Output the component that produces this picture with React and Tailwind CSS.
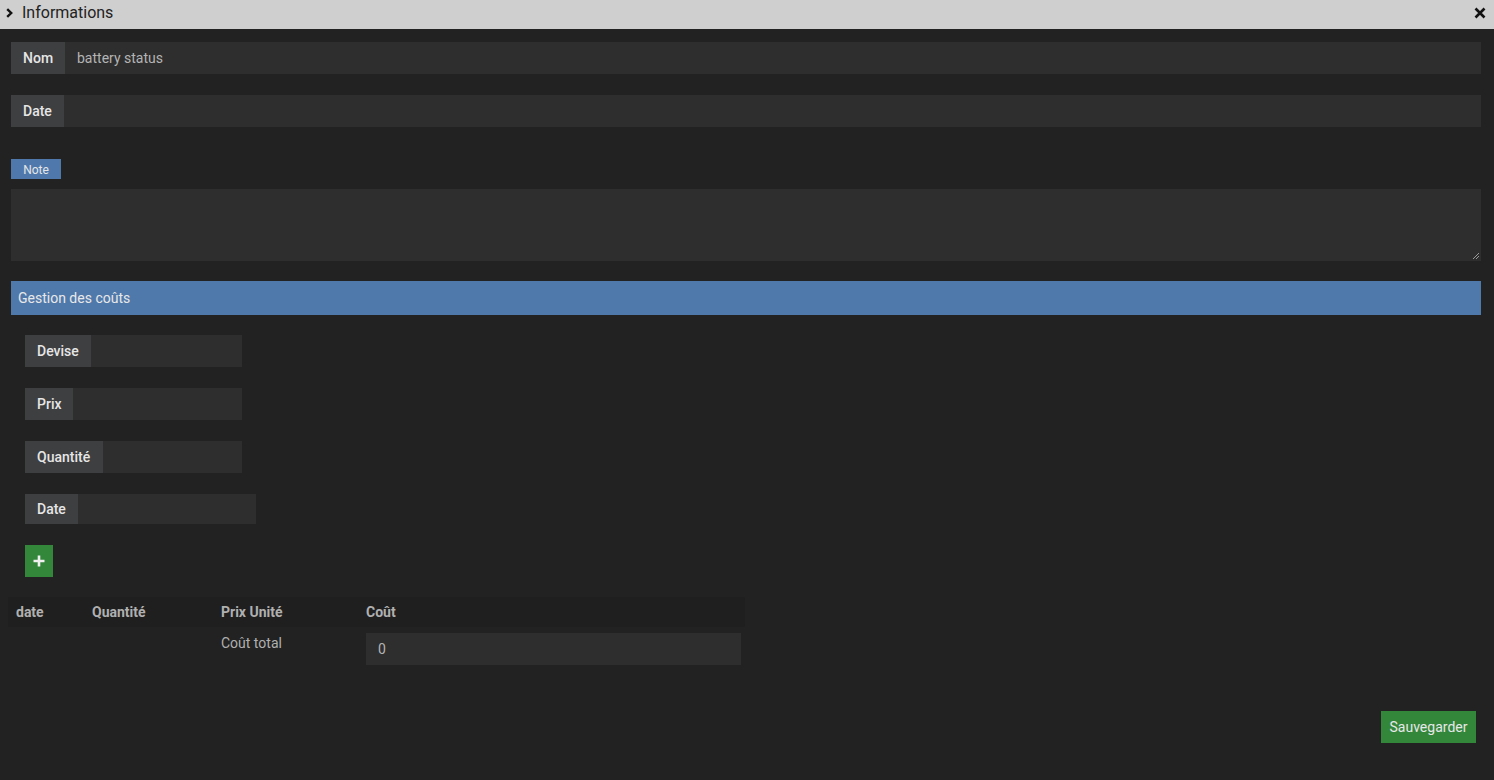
import React from "react";

export default function App() {
  return (
    <div className="w-[1494px] h-[780px] bg-[#222222] overflow-hidden" style={{ fontFamily: "Roboto, 'Liberation Sans', sans-serif" }}>
      <div className="h-[29px] bg-[#cfcfcf] flex items-center justify-between pl-[6px] pr-[8px] pb-[4px]">
        <div className="flex items-center gap-[9px]">
          <svg width="7" height="10" viewBox="0 0 7 10"><path d="M1.2 1.2 L5.2 5 L1.2 8.8" fill="none" stroke="#111" strokeWidth="2.4" /></svg>
          <span className="text-[16px] text-[#222] leading-none">Informations</span>
        </div>
        <svg width="12" height="12" viewBox="0 0 12 12"><path d="M1.5 1.5 L10.5 10.5 M10.5 1.5 L1.5 10.5" stroke="#111" strokeWidth="2.6" /></svg>
      </div>

      <div className="pl-[11px] pr-[13px] pt-[13px]">
        <div className="flex h-[32px]">
          <div className="flex items-center w-[54px] pl-[12px] bg-[#3e3f41] text-[#e6e6e6] font-medium text-[14px]">Nom</div>
          <div className="flex items-center flex-1 bg-[#2e2e2e] text-[#b4b4b4] text-[14px] pl-[12px]">battery status</div>
        </div>
        <div className="flex h-[32px] mt-[21px]">
          <div className="flex items-center w-[53px] pl-[12px] bg-[#3e3f41] text-[#e6e6e6] font-medium text-[14px]">Date</div>
          <div className="flex-1 bg-[#2e2e2e]"></div>
        </div>

        <div className="mt-[32px] w-[50px] h-[20px] bg-[#4f79ad] text-[#e6e6e6] text-[12px] flex items-center justify-center pt-[2px]">Note</div>
        <div className="mt-[10px] h-[72px] bg-[#2e2e2e] relative">
          <svg className="absolute right-[1px] bottom-[1px]" width="8" height="8" viewBox="0 0 8 8"><path d="M7 1 L1 7 M7 4 L4 7" stroke="#999" strokeWidth="1" /></svg>
        </div>

        <div className="mt-[20px] h-[34px] bg-[#5079ab] flex items-center pl-[7px] text-[14px] text-[#e8e8e8]">Gestion des coûts</div>

        <div className="pl-[14px] pt-[20px] flex flex-col">
          <div className="flex h-[32px] w-[217px]">
            <div className="flex items-center w-[66px] pl-[12px] bg-[#3e3f41] text-[#e6e6e6] font-medium text-[14px]">Devise</div>
            <div className="flex-1 bg-[#2e2e2e]"></div>
          </div>
          <div className="flex h-[32px] w-[217px] mt-[21px]">
            <div className="flex items-center w-[48px] pl-[12px] bg-[#3e3f41] text-[#e6e6e6] font-medium text-[14px]">Prix</div>
            <div className="flex-1 bg-[#2e2e2e]"></div>
          </div>
          <div className="flex h-[32px] w-[217px] mt-[21px]">
            <div className="flex items-center w-[78px] pl-[12px] bg-[#3e3f41] text-[#e6e6e6] font-medium text-[14px]">Quantité</div>
            <div className="flex-1 bg-[#2e2e2e]"></div>
          </div>
          <div className="flex h-[30px] w-[231px] mt-[21px]">
            <div className="flex items-center w-[53px] pl-[12px] bg-[#3e3f41] text-[#e6e6e6] font-medium text-[14px]">Date</div>
            <div className="flex-1 bg-[#2e2e2e]"></div>
          </div>
          <button className="mt-[21px] w-[28px] h-[32px] bg-[#32873b] flex items-center justify-center">
            <svg width="12" height="12" viewBox="0 0 12 12"><path d="M6 0.5 V11.5 M0.5 6 H11.5" stroke="#f0f0f0" strokeWidth="2.6" /></svg>
          </button>
        </div>
      </div>

      <div className="ml-[8px] mt-[20px] w-[737px]">
        <div className="flex h-[30px] bg-[#1f1f1f] text-[14px] font-bold text-[#b0b0b0]">
          <div className="w-[76px] pl-[8px] pt-[5px]">date</div>
          <div className="w-[129px] pl-[8px] pt-[5px]">Quantité</div>
          <div className="w-[145px] pl-[8px] pt-[5px]">Prix Unité</div>
          <div className="flex-1 pl-[8px] pt-[5px]">Coût</div>
        </div>
        <div className="flex text-[14px] text-[#b0b0b0]">
          <div className="w-[76px]"></div>
          <div className="w-[129px]"></div>
          <div className="w-[145px] pl-[8px] pt-[6px]">Coût total</div>
          <div className="flex-1 pl-[8px] pt-[6px] pb-[8px]">
            <div className="w-[375px] h-[32px] bg-[#2e2e2e] flex items-center pl-[12px] text-[#b4b4b4]">0</div>
          </div>
        </div>
      </div>

      <div className="flex justify-end pr-[18px] mt-[38px]">
        <button className="w-[95px] h-[32px] bg-[#32873b] text-[#e8e8e8] text-[14px]">Sauvegarder</button>
      </div>
    </div>
  );
}
